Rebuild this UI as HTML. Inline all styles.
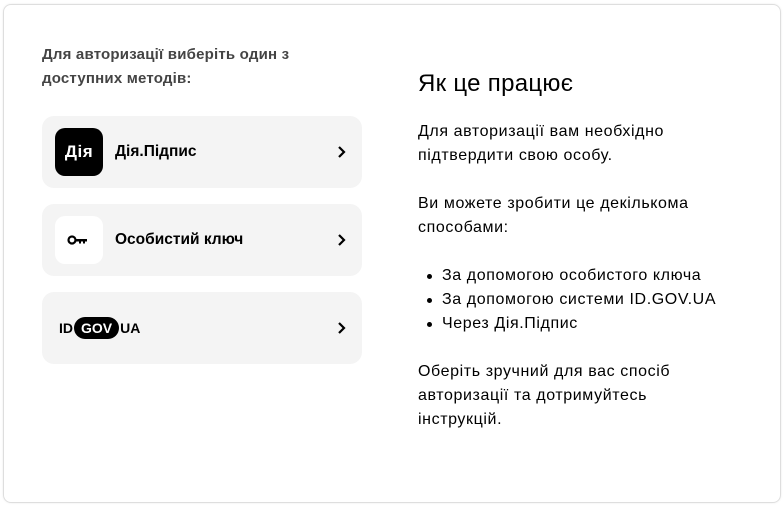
<!DOCTYPE html>
<html><head><meta charset="utf-8"><style>
*{margin:0;padding:0;box-sizing:border-box}
body{width:784px;height:506px;background:#fff;font-family:"Liberation Sans",Arial,sans-serif;position:relative;overflow:hidden}
.card{position:absolute;left:3px;top:4px;width:778px;height:499px;border:1px solid #dedede;border-radius:8px;box-shadow:0 0 2px rgba(0,0,0,.08)}
.lead{position:absolute;left:42px;top:43px;font-size:15px;font-weight:bold;color:#444;line-height:24px;letter-spacing:0.2px}
.item{position:absolute;left:42px;width:320px;height:72px;background:#f4f4f4;border-radius:12px}
.ic{position:absolute;left:13px;top:12px;width:48px;height:48px;border-radius:10px}
.lbl{position:absolute;left:73px;top:27px;font-size:15.5px;font-weight:bold;color:#000}
.chev{position:absolute;left:294px;top:29px}
.r{position:absolute;left:418px;color:#000;font-size:16px;line-height:24px;letter-spacing:0.6px}
h2{position:absolute;left:418px;top:70px;font-size:24px;font-weight:normal;color:#000;letter-spacing:0.3px}
ul{list-style:none}
li{position:relative;padding-left:24px}
li:before{content:"";position:absolute;left:9px;top:10px;width:5px;height:5px;border-radius:50%;background:#000}
</style></head><body>
<div class="card"></div>
<div class="lead">Для авторизації виберіть один з<br>доступних методів:</div>

<div class="item" style="top:116px">
 <div class="ic" style="background:#000;color:#fff;font-weight:bold;font-size:17px;text-align:center;line-height:48px;letter-spacing:0.5px">Дія</div>
 <div class="lbl">Дія.Підпис</div>
 <svg class="chev" width="12" height="14" viewBox="0 0 12 14"><path d="M3 2l5 5-5 5" fill="none" stroke="#000" stroke-width="2.2"/></svg>
</div>
<div class="item" style="top:204px">
 <div class="ic" style="background:#fff">
  <svg width="48" height="48" viewBox="0 0 48 48"><circle cx="17" cy="24" r="3.5" fill="none" stroke="#000" stroke-width="2.2"/><path d="M20 23h12v2.5h-2v2h-2v-2h-2v2h-2v-2h-4z" fill="#000"/></svg>
 </div>
 <div class="lbl">Особистий ключ</div>
 <svg class="chev" width="12" height="14" viewBox="0 0 12 14"><path d="M3 2l5 5-5 5" fill="none" stroke="#000" stroke-width="2.2"/></svg>
</div>
<div class="item" style="top:292px">
 <div style="position:absolute;left:17px;top:25px;font-weight:bold;font-size:14px;color:#000;display:flex;align-items:center">
  <span>ID</span><span style="background:#000;color:#fff;border-radius:12px;padding:3px 7px;margin:0 1px">GOV</span><span>UA</span>
 </div>
 <svg class="chev" width="12" height="14" viewBox="0 0 12 14"><path d="M3 2l5 5-5 5" fill="none" stroke="#000" stroke-width="2.2"/></svg>
</div>

<h2>Як це працює</h2>
<div class="r" style="top:120px">Для авторизації вам необхідно<br>підтвердити свою особу.</div>
<div class="r" style="top:192px">Ви можете зробити це декількома<br>способами:</div>
<ul class="r" style="top:264px;left:418px">
 <li>За допомогою особистого ключа</li>
 <li>За допомогою системи ID.GOV.UA</li>
 <li>Через Дія.Підпис</li>
</ul>
<div class="r" style="top:360px">Оберіть зручний для вас спосіб<br>авторизації та дотримуйтесь<br>інструкцій.</div>
</body></html>
